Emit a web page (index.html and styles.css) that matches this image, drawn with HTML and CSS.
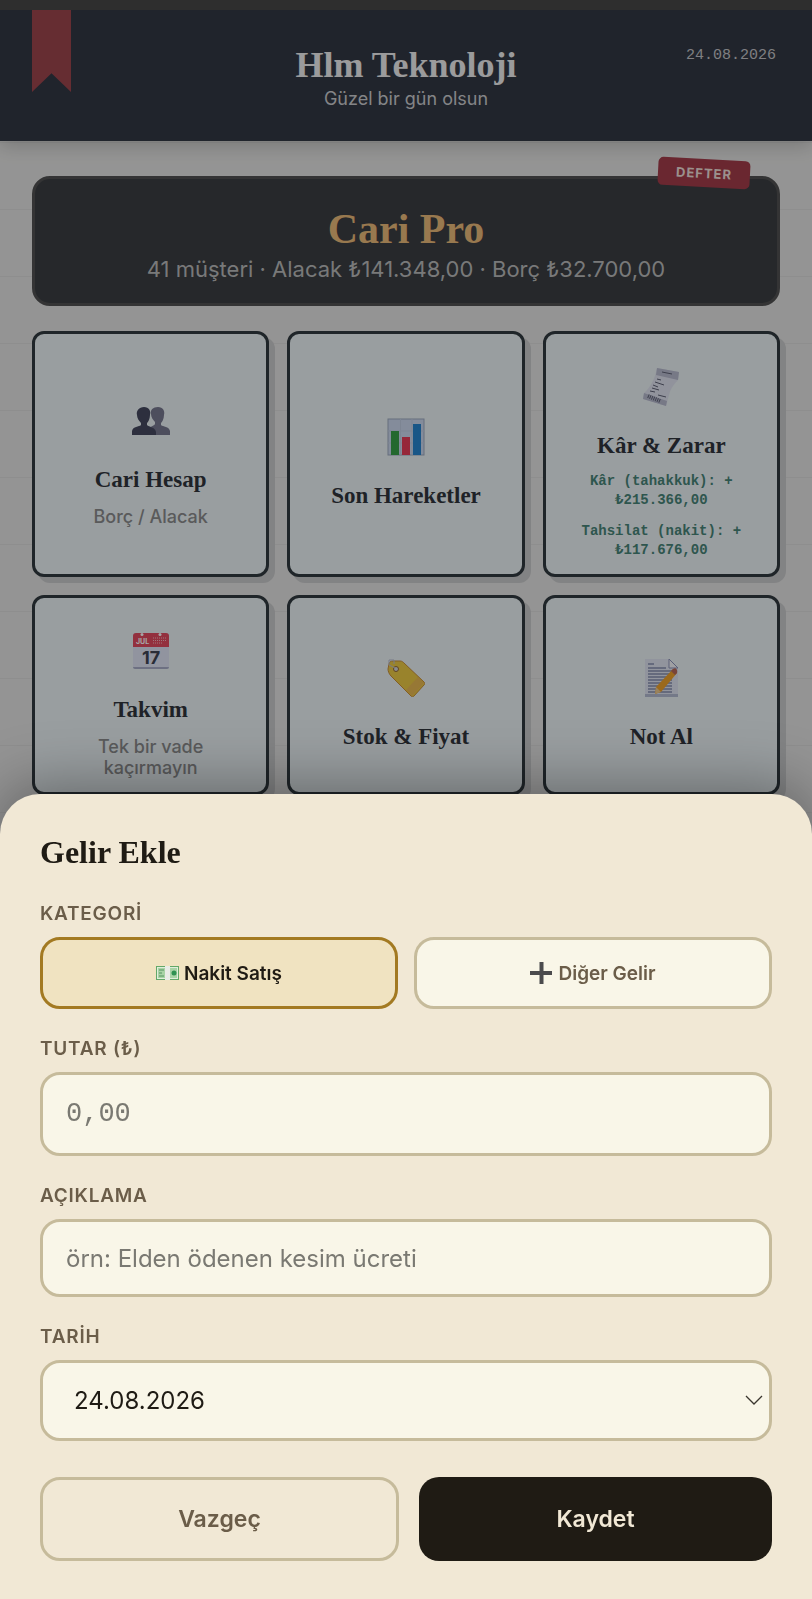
FILE: index.html
```html
<!DOCTYPE html>
<html lang="tr">
<head>
  <meta charset="UTF-8">
  <meta name="viewport" content="width=device-width, initial-scale=1">
  <title>Hlm Teknoloji</title>
  <link rel="stylesheet" href="styles.css">
</head>
<body>
  <header class="header">
    <span class="ribbon"></span>
    <div class="brand">
      <h1>Hlm Teknoloji</h1>
      <p>Güzel bir gün olsun</p>
    </div>
    <time class="today" datetime="2026-08-24">24.08.2026</time>
  </header>

  <main class="main">
    <section class="hero">
      <span class="badge">DEFTER</span>
      <h2>Cari Pro</h2>
      <p>41 müşteri · Alacak ₺141.348,00 · Borç ₺32.700,00</p>
    </section>

    <nav class="grid">
      <a class="card" href="#cari">
        <svg class="icon" viewBox="0 0 38 38">
          <g fill="#77788f"><path d="M26 5c5 0 7 4 6 8 0 4-2 7-3 8v2c2 2 8 1 9 6v4H17v-5c1-4 5-4 6-6v-2c-2-2-4-5-4-8-1-4 2-7 7-7z"/></g>
          <g fill="#454960"><path d="M12 5c5 0 7 4 6 8 0 4-2 7-3 8v2c2 2 8 2 9 7v3H0v-4c1-5 7-4 9-6v-2c-2-2-4-5-4-8-1-4 2-8 7-8z"/></g>
        </svg>
        <h3>Cari Hesap</h3>
        <p>Borç / Alacak</p>
      </a>
      <a class="card" href="#hareketler">
        <svg class="icon" viewBox="0 0 38 38">
          <rect x="1" y="1" width="36" height="36" fill="#cbd8ee" stroke="#9da9c0"/>
          <path d="M1 13h36M1 25h36M13.500 1v36M25 1v36" stroke="#c0cde2" fill="none"/>
          <rect x="4" y="13" width="8" height="24" fill="#38a047"/>
          <rect x="15" y="19" width="8" height="18" fill="#e63c58"/>
          <rect x="26" y="6" width="8" height="31" fill="#2684d0"/>
        </svg>
        <h3>Son Hareketler</h3>
      </a>
      <a class="card" href="#kar-zarar">
        <svg class="icon" viewBox="0 0 38 38">
          <path d="M15 0l22 4-1 8c-5 5-8 10-9 15l-3 11L1 31l1-6c6-5 11-14 13-25z" fill="#dfe2f0"/>
          <path d="M15 0l22 4-1 8-22-5zM2 25l23 8-1 5L1 31z" fill="#b7bace"/>
          <path d="M20 4l10 2M15 11l4 1M13 14l9 3M11 17l5 2M10 20l7 2M8 23l5 1M16 27l8 2" stroke="#5e6175" fill="none"/>
          <path d="M6 28l12 5" stroke="#5e6175" stroke-width="4" stroke-dasharray="1 1"/>
        </svg>
        <h3>Kâr &amp; Zarar</h3>
        <div class="totals">
          <span>Kâr (tahakkuk): +<br>₺215.366,00</span>
          <span>Tahsilat (nakit): +<br>₺117.676,00</span>
        </div>
      </a>
      <a class="card" href="#takvim">
        <svg class="icon" viewBox="0 0 38 38">
          <rect x="1" y="1" width="36" height="36" rx="3" fill="#dfe3f4"/>
          <path d="M1 15V4a3 3 0 0 1 3-3h30a3 3 0 0 1 3 3v11z" fill="#e24a60"/>
          <path d="M1 35h36a2 2 0 0 1-2 2H3a2 2 0 0 1-2-2z" fill="#a8acc8"/>
          <circle cx="10" cy="2.500" r="1.500" fill="#fff"/><circle cx="28" cy="2.500" r="1.500" fill="#fff"/>
          <path d="M21 6h13M21 8.500h13M21 11h10" stroke="#f6b7c0" stroke-dasharray="1 1"/>
          <text x="4" y="12" font-size="7" font-weight="700" fill="#fff">JUL</text>
          <text x="19" y="32" font-size="18" font-weight="700" text-anchor="middle" fill="#3f4455">17</text>
        </svg>
        <h3>Takvim</h3>
        <p>Tek bir vade kaçırmayın</p>
      </a>
      <a class="card" href="#stok">
        <svg class="icon" viewBox="0 0 38 38">
          <path d="M1 10l1-5c0-2 2-3 4-3l7 0c2 0 3 1 4 2l20 19c1 1 1 2 0 3L27 37c-1 1-2 1-3 0L4 17c-2-2-3-5-3-7z" fill="#ecc944" stroke="#c98f3a"/>
          <path d="M31 18l6 6-12 13-6-6z" fill="#e7ae5c" opacity=".6"/>
          <circle cx="9" cy="10" r="2.500" fill="#d5d6dc" stroke="#92672e"/>
          <path d="M8 9L2 6V1h5v4" fill="none" stroke="#b9bdd0"/>
        </svg>
        <h3>Stok &amp; Fiyat</h3>
      </a>
      <a class="card" href="#not">
        <svg class="icon" viewBox="0 0 38 38">
          <path d="M3 0h24l9 9v29H3z" fill="#dfe4f2"/>
          <path d="M3 35h33v3H3z" fill="#b3bbd1"/>
          <path d="M27 0v9h9z" fill="#f5f6fb" stroke="#8b93b8"/>
          <path d="M6 5h6M6 9h18M6 12h24M6 15h24M6 18h24M6 21h24M6 24h24M6 27h24M6 30h24M6 33h24" stroke="#59638d"/>
          <path d="M31 10l4 4-16 19-6 2 1-7z" fill="#efa12c"/>
          <path d="M31 10c2-2 5 0 4 4l-2 2-4-4z" fill="#b9695a"/>
          <path d="M14 28l5 5-6 2z" fill="#ecc890"/>
        </svg>
        <h3>Not Al</h3>
      </a>
    </nav>
  </main>

  <div class="overlay"></div>

  <form class="sheet" role="dialog" aria-labelledby="sheetTitle">
    <h2 id="sheetTitle">Gelir Ekle</h2>

    <div class="field" role="group" aria-labelledby="katLabel">
      <span class="label" id="katLabel">KATEGORİ</span>
      <div class="chips">
        <button type="button" class="chip active">
          <svg width="23" height="22" viewBox="0 0 23 22">
            <rect x="0" y="4" width="23" height="14" fill="#63a868"/>
            <rect x="1.500" y="5.500" width="20" height="11" fill="#a8d3a5" stroke="#e0eedb"/>
            <path d="M3 8h5M3 11h3M3 14h5" stroke="#559460"/>
            <circle cx="18" cy="11" r="2.500" fill="#2f9150"/>
            <rect x="9" y="4" width="5" height="14" fill="#e9ece6"/>
          </svg>
          Nakit Satış
        </button>
        <button type="button" class="chip">
          <svg width="23" height="22" viewBox="0 0 23 22">
            <path d="M9.500 0h4v9H22v4h-8.500v9h-4v-9H0V9h9.500z" fill="#4b4b4d"/>
          </svg>
          Diğer Gelir
        </button>
      </div>
    </div>

    <div class="field">
      <label class="label" for="tutar">TUTAR (₺)</label>
      <input class="input amount" type="text" id="tutar" inputmode="decimal" placeholder="0,00">
    </div>

    <div class="field">
      <label class="label" for="aciklama">AÇIKLAMA</label>
      <input class="input" type="text" id="aciklama" placeholder="örn: Elden ödenen kesim ücreti">
    </div>

    <div class="field">
      <label class="label" for="tarih">TARİH</label>
      <div class="select">
        <select class="input date" id="tarih">
          <option>24.08.2026</option>
        </select>
        <svg class="chevron" width="18" height="10" viewBox="0 0 18 10">
          <path d="M1 1l8 8 8-8" fill="none" stroke="#3a362e" stroke-width="1.300"/>
        </svg>
      </div>
    </div>

    <div class="actions">
      <button type="button" class="btn cancel">Vazgeç</button>
      <button type="submit" class="btn save">Kaydet</button>
    </div>
  </form>
</body>
</html>
```

FILE: styles.css
```css
* {
  box-sizing: border-box;
}
body {
  margin: 0;
  border-top: 10px solid #484848;
  background: #e4e4e3 linear-gradient(transparent 66px, #dbdbda 66px) 0 9px / 100% 67px;
  font-family: Inter, "Liberation Sans", sans-serif;
}
h1, h2, h3, p {
  margin: 0;
}
h1, h2, h3 {
  font-family: "Liberation Serif", serif;
}

/* header */
.header {
  position: relative;
  display: grid;
  grid-template-columns: 1fr auto 1fr;
  padding: 32px 36px 31px;
  background: #323844;
  box-shadow: 0 4px 18px rgba(0,0,0,0.2);
}
.ribbon {
  position: absolute;
  top: 0;
  left: 32px;
  width: 39px;
  height: 82px;
  background: #9d454e;
  clip-path: polygon(0 0, 100% 0, 100% 100%, 50% 77%, 0 100%);
}
.brand {
  grid-column: 2;
  text-align: center;
}
.brand h1 {
  font-size: 36px;
  line-height: 46px;
  color: #eeeef0;
}
.brand p {
  font-size: 18px;
  line-height: 22px;
  color: #cbccd0;
}
.today {
  justify-self: end;
  font-family: "Liberation Mono", monospace;
  font-size: 15px;
  line-height: 28px;
  color: #c3c4c8;
}

.main {
  padding: 35px 32px;
}
.hero {
  position: relative;
  padding: 24px 20px 20px;
  border: 3px solid #505152;
  border-radius: 18px;
  background: #3b3e42;
  text-align: center;
}
.hero h2 {
  font-size: 42px;
  line-height: 52px;
  color: #eaba7a;
}
.hero p {
  font-size: 22px;
  line-height: 28px;
  color: #b9babb;
}
.badge {
  position: absolute;
  top: -20px;
  right: 27px;
  padding: 0 18px;
  border-radius: 5px;
  background: #a33c4b;
  color: #eedfd9;
  font-size: 13px;
  font-weight: 700;
  line-height: 28px;
  letter-spacing: 1px;
  transform: rotate(3deg);
}

/* menu cards */
.grid {
  display: grid;
  grid-template-columns: repeat(3, 1fr);
  gap: 18px;
  margin-top: 25px;
}
.card {
  display: flex;
  flex-direction: column;
  align-items: center;
  justify-content: center;
  padding: 14px 24px;
  border: 3px solid #31393f;
  border-radius: 12px;
  background: #ebf3f6;
  box-shadow: 6px 6px 0 #c8c9cb;
  text-align: center;
  text-decoration: none;
}
.icon {
  width: 38px;
  height: 38px;
  margin: 20px 0;
}
.card h3 {
  margin-top: 6px;
  font-size: 23px;
  line-height: 28px;
  color: #31353d;
}
.card p {
  margin-top: 12px;
  max-width: 140px;
  font-size: 18px;
  font-weight: 500;
  line-height: 21px;
  color: #8a8b8d;
}
.totals {
  display: grid;
  gap: 12px;
  margin-top: 12px;
  font-family: "Liberation Mono", monospace;
  font-size: 14px;
  font-weight: 700;
  line-height: 19px;
  color: #488478;
}

.overlay {
  position: fixed;
  inset: 0;
  background: rgba(0,0,0,0.35);
}

/* bottom sheet */
.sheet {
  position: fixed;
  left: 0;
  right: 0;
  bottom: 0;
  padding: 40px 40px 38px;
  border-radius: 40px 40px 0 0;
  background: #f1e8d5;
  box-shadow: 0 -8px 60px rgba(0,0,0,0.35);
}
.sheet h2 {
  margin-bottom: 31px;
  font-size: 32px;
  line-height: 36px;
  color: #1f1b14;
}
.field {
  margin-bottom: 27px;
}
.label {
  display: block;
  margin-bottom: 11px;
  font-size: 19px;
  font-weight: 600;
  line-height: 25px;
  letter-spacing: 0.04em;
  color: #6b5d49;
}
.chips {
  display: grid;
  grid-template-columns: 1fr 1fr;
  gap: 16px;
}
.chip,
.input,
.btn {
  border: 3px solid #c6bb9b;
  border-radius: 20px;
  font-family: inherit;
}
.chip {
  display: flex;
  align-items: center;
  justify-content: center;
  gap: 5px;
  height: 72px;
  background: #f9f6e8;
  color: #6b5d49;
  font-size: 19px;
  font-weight: 600;
  cursor: pointer;
}
.chip.active {
  background: #f0e3c1;
  border-color: #a37a22;
  color: #1f1b14;
}
.input {
  display: block;
  width: 100%;
  height: 78px;
  padding: 0 23px;
  background: #f9f6e8;
  color: #1f1b14;
  font-size: 24px;
}
.input::placeholder {
  color: #7a7972;
}
.amount {
  height: 84px;
  font-family: "Liberation Mono", monospace;
  font-size: 27px;
}
.select {
  position: relative;
}
.date {
  height: 81px;
  padding: 0 31px;
  appearance: none;
}
.chevron {
  position: absolute;
  top: 35px;
  right: 9px;
  pointer-events: none;
}
.actions {
  display: flex;
  gap: 20px;
  margin-top: 36px;
}
.btn {
  flex: 1 1 0;
  height: 84px;
  padding: 0;
  font-size: 23px;
  font-weight: 600;
  cursor: pointer;
}
.cancel {
  background: transparent;
  color: #6b5d49;
}
.save {
  border: none;
  background: #1f1b14;
  color: #f1e8d5;
}
```
